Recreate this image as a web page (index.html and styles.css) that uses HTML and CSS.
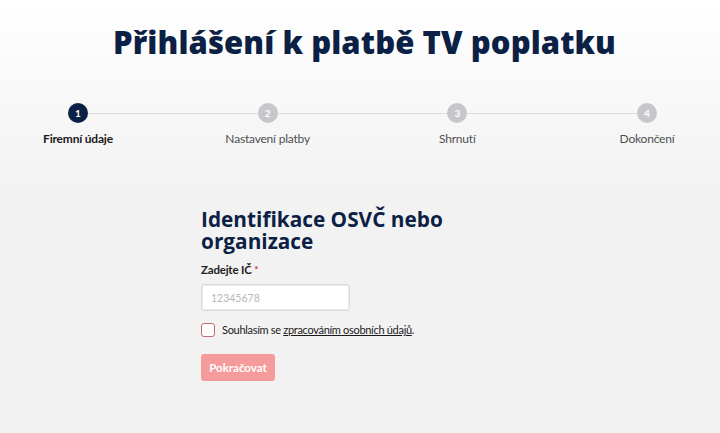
FILE: index.html
```html
<!DOCTYPE html>
<html lang="cs">
<head>
<meta charset="utf-8">
<title>Přihlášení k platbě TV poplatku</title>
<link rel="stylesheet" href="styles.css">
</head>
<body>
<main class="page">
  <h1 class="title">Přihlášení k platbě TV poplatku</h1>
  <ol class="steps">
    <li class="step active"><span class="dot">1</span><span class="label">Firemní údaje</span></li>
    <li class="step"><span class="dot">2</span><span class="label">Nastavení platby</span></li>
    <li class="step"><span class="dot">3</span><span class="label">Shrnutí</span></li>
    <li class="step"><span class="dot">4</span><span class="label">Dokončení</span></li>
  </ol>
  <form class="form">
    <h2 class="form-title">Identifikace OSVČ nebo organizace</h2>
    <label class="field-label" for="ic">Zadejte IČ <span class="req">*</span></label>
    <input class="input" id="ic" type="text" placeholder="12345678">
    <label class="consent">
      <span class="box"></span>
      <span>Souhlasím se <a href="#" class="link">zpracováním osobních údajů</a>.</span>
    </label>
    <button type="button" class="btn">Pokračovat</button>
  </form>
</main>
</body>
</html>
```
FILE: styles.css
```css
html, body {
  margin: 0;
  padding: 0;
}
body {
  background: linear-gradient(#ffffff 0px, #f2f2f2 190px, #f2f2f2 100%);
  min-height: 433px;
  font-family: Lato, "Liberation Sans", sans-serif;
  color: #1d1d1f;
}
.page {
  padding-top: 22px;
}
.title {
  margin: 0;
  padding-left: 9px;
  text-align: center;
  font-family: "Open Sans", "Liberation Sans", sans-serif;
  font-weight: 800;
  font-size: 31px;
  line-height: 40px;
  color: #0c1f44;
  letter-spacing: 0.1px;
}
.steps {
  list-style: none;
  margin: 41px 8px 0 13px;
  padding: 0;
  display: flex;
  justify-content: space-between;
  position: relative;
}
.steps::before {
  content: "";
  position: absolute;
  left: 65px;
  right: 65px;
  top: 10px;
  height: 1px;
  background: #dcdde0;
}
.step {
  width: 130px;
  display: flex;
  flex-direction: column;
  align-items: center;
  position: relative;
}
.dot {
  width: 20px;
  height: 20px;
  border-radius: 50%;
  background: #c6c7cb;
  color: #fff;
  font-size: 10px;
  font-weight: 700;
  line-height: 20px;
  text-align: center;
}
.active .dot {
  background: #0c1f44;
}
.label {
  margin-top: 8px;
  font-size: 12px;
  letter-spacing: -0.2px;
  line-height: 16px;
  color: #4f4f4f;
}
.active .label {
  color: #1a1a1a;
  font-weight: 700;
}
.form {
  width: 318px;
  margin: 61px auto 0;
  display: flex;
  flex-direction: column;
  align-items: flex-start;
}
.form-title {
  margin: 0;
  font-family: "Open Sans", "Liberation Sans", sans-serif;
  font-size: 20.8px;
  line-height: 22px;
  font-weight: 700;
  color: #0c1f44;
  width: 280px;
}
.field-label {
  margin-top: 9px;
  font-size: 11.5px;
  letter-spacing: -0.2px;
  line-height: 16px;
  font-weight: 700;
  color: #222;
}
.req {
  color: #d0263a;
  font-size: 10px;
  vertical-align: 1px;
}
.input {
  margin-top: 6px;
  width: 149px;
  height: 27px;
  box-sizing: border-box;
  border: 1px solid #dadada;
  border-radius: 3px;
  background: #fff;
  padding: 0 9px;
  font-family: inherit;
  font-size: 10.5px;
  box-shadow: inset 0 0 0 1px #ececec;
}
.input::placeholder {
  color: #b8b8b8;
}
.consent {
  margin-top: 12px;
  display: flex;
  align-items: center;
  gap: 7px;
  font-size: 11px;
  letter-spacing: -0.3px;
  line-height: 14px;
  color: #1a1a1a;
}
.box {
  width: 12px;
  height: 12px;
  border: 1px solid #c66a6a;
  border-radius: 3px;
  background: #fff;
  flex: none;
}
.link {
  color: #1a1a1a;
  text-decoration: underline;
}
.btn {
  margin-top: 17px;
  width: 74px;
  height: 27px;
  border: 0;
  border-radius: 3px;
  background: #f69b9b;
  color: #fff;
  font-family: inherit;
  font-size: 11.5px;
  font-weight: 700;
  padding: 0;
}
```
